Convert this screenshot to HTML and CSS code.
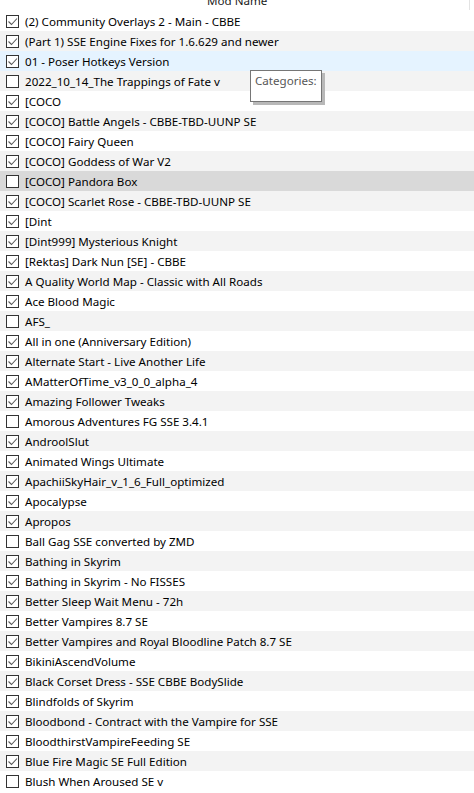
FILE: index.html
```html
<!DOCTYPE html>
<html lang="en">
<head>
  <meta charset="UTF-8" />
  <title>Mod list</title>
  <link rel="stylesheet" href="styles.css">
</head>
<body>
  <div class="list">
    <div class="header"><span class="col-name">Mod Name</span><span class="sep"></span></div>
    <div id="rows"></div>
    <div class="tooltip">Categories:</div>
  </div>

  <script>
    const mods = [
      ["(2) Community Overlays 2 - Main - CBBE", 1],
      ["(Part 1) SSE Engine Fixes for 1.6.629 and newer", 1],
      ["01 - Poser Hotkeys Version", 1],
      ["2022_10_14_The Trappings of Fate v", 0],
      ["[COCO", 1],
      ["[COCO] Battle Angels - CBBE-TBD-UUNP SE", 1],
      ["[COCO] Fairy Queen", 1],
      ["[COCO] Goddess of War V2", 1],
      ["[COCO] Pandora Box", 0],
      ["[COCO] Scarlet Rose - CBBE-TBD-UUNP SE", 1],
      ["[Dint", 1],
      ["[Dint999] Mysterious Knight", 1],
      ["[Rektas] Dark Nun [SE] - CBBE", 1],
      ["A Quality World Map - Classic with All Roads", 1],
      ["Ace Blood Magic", 1],
      ["AFS_", 0],
      ["All in one (Anniversary Edition)", 1],
      ["Alternate Start - Live Another Life", 1],
      ["AMatterOfTime_v3_0_0_alpha_4", 1],
      ["Amazing Follower Tweaks", 1],
      ["Amorous Adventures FG SSE 3.4.1", 0],
      ["AndroolSlut", 1],
      ["Animated Wings Ultimate", 1],
      ["ApachiiSkyHair_v_1_6_Full_optimized", 1],
      ["Apocalypse", 1],
      ["Apropos", 1],
      ["Ball Gag SSE converted by ZMD", 0],
      ["Bathing in Skyrim", 1],
      ["Bathing in Skyrim - No FISSES", 1],
      ["Better Sleep Wait Menu - 72h", 1],
      ["Better Vampires 8.7 SE", 1],
      ["Better Vampires and Royal Bloodline Patch 8.7 SE", 1],
      ["BikiniAscendVolume", 1],
      ["Black Corset Dress - SSE CBBE BodySlide", 1],
      ["Blindfolds of Skyrim", 1],
      ["Bloodbond - Contract with the Vampire for SSE", 1],
      ["BloodthirstVampireFeeding SE", 1],
      ["Blue Fire Magic SE Full Edition", 1],
      ["Blush When Aroused SE v", 0]
    ];

    const check = '<svg width="11" height="11" viewBox="0 0 11 11"><polyline points="1.5,5.5 4.5,8.5 10,2.5" fill="none" stroke="#5a5a5a" stroke-width="1.1"/></svg>';

    const rows = document.getElementById("rows");
    mods.forEach((m, i) => {
      const row = document.createElement("div");
      row.className = "row";
      if (i % 2 == 1) row.classList.add("alt");
      if (i == 2) row.classList.add("hover");
      if (i == 8) row.classList.add("selected");
      row.innerHTML = `<span class="box">${m[1] ? check : ""}</span><span class="name">${m[0]}</span>`;
      rows.appendChild(row);
    });
  </script>
</body>
</html>
```

FILE: styles.css
```css
body { margin: 0; background: #fff; font-family: "Noto Sans", "Open Sans", sans-serif; font-size: 11.6px; color: #000; }
.list { position: relative; width: 474px; height: 793px; overflow: hidden; }
.header { height: 11px; overflow: hidden; display: flex; align-items: flex-end; position: relative; }
.col-name { margin-left: 207px; line-height: 12px; margin-bottom: 4px; color: #1a1a1a; }
.sep { position: absolute; left: 469px; top: 0; width: 1px; height: 10px; background: #e3e3e3; }
.row { height: 20px; display: flex; align-items: center; white-space: nowrap; }
.row.alt { background: #f3f3f3; }
.row.hover { background: #e5f3ff; }
.row.selected { background: #d9d9d9; }
.box { width: 11px; height: 11px; border: 1px solid #333; background: #fff; margin-left: 6px; margin-right: 6px; flex: none; display: flex; margin-top: 1px; }
.name { line-height: 20px; padding-top: 2px; }
.tooltip { position: absolute; left: 250px; top: 70px; width: 62px; height: 25px; padding: 3px 4px 2px; border: 1px solid #767676; background: #fff; color: #575757; box-shadow: 3px 3px 0 #b8b8b8; line-height: 14px; }
```
